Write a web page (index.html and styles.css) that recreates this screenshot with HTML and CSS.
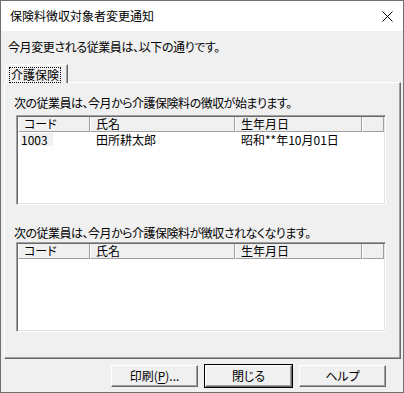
FILE: index.html
```html
<!DOCTYPE html>
<html lang="ja">
<head>
  <meta charset="UTF-8" />
  <title>保険料徴収対象者変更通知</title>
  <link rel="stylesheet" href="styles.css">
</head>
<body>
  <div class="window">
    <div class="titlebar">
      <span class="title">保険料徴収対象者変更通知</span>
      <svg class="close" width="11" height="11" viewBox="0 0 11 11">
        <path d="M0.5 0.5 L10.5 10.5 M10.5 0.5 L0.5 10.5" stroke="#000" stroke-width="1" fill="none"/>
      </svg>
    </div>

    <div class="content">
      <p class="intro">今月変更される従業員は、以下の通りです。</p>

      <div class="tabs">
        <div class="tab"><span class="tab-label">介護保険</span></div>
      </div>

      <div class="panel">
        <p class="caption first">次の従業員は、今月から介護保険料の徴収が始まります。</p>
        <div class="list">
          <div class="list-head">
            <div class="col code">コード</div>
            <div class="col name">氏名</div>
            <div class="col birth">生年月日</div>
            <div class="col rest"></div>
          </div>
          <div class="list-row">
            <div class="cell code"><span class="selected">1003</span></div>
            <div class="cell name">田所耕太郎</div>
            <div class="cell birth">昭和**年10月01日</div>
          </div>
        </div>

        <p class="caption second">次の従業員は、今月から介護保険料が徴収されなくなります。</p>
        <div class="list">
          <div class="list-head">
            <div class="col code">コード</div>
            <div class="col name">氏名</div>
            <div class="col birth">生年月日</div>
            <div class="col rest"></div>
          </div>
        </div>
      </div>

      <div class="buttons">
        <button class="btn">印刷(<u>P</u>)...</button>
        <button class="btn default">閉じる</button>
        <button class="btn">ヘルプ</button>
      </div>
    </div>
  </div>
</body>
</html>
```

FILE: styles.css
```css
* {
  box-sizing: border-box;
}

body {
  margin: 0;
  font-family: "Noto Sans CJK JP", "Noto Sans", sans-serif;
  font-size: 12px;
  font-feature-settings: "palt";
  color: #000;
  background: #fff;
}

p {
  margin: 0;
}

.window {
  width: 404px;
  height: 393px;
  border: 1px solid #6f6f6f;
  display: flex;
  flex-direction: column;
}

.titlebar {
  height: 30px;
  background: #fff;
  display: flex;
  align-items: center;
  justify-content: space-between;
  padding: 0 10px 0 9px;
}

.title {
  line-height: 16px;
}

.close {
  display: block;
}

.content {
  flex: 1;
  background: #f0f0f0;
  padding: 8px 2px 0 3px;
  display: flex;
  flex-direction: column;
}

.intro {
  line-height: 16px;
  padding-left: 4px;
  letter-spacing: -0.4px;
}

.tabs {
  margin-top: 9px;
  padding-left: 2px;
  display: flex;
  height: 18px;
}

.tab {
  width: 62px;
  height: 19px;
  background: #f0f0f0;
  border-top: 1px solid #fff;
  border-left: 1px solid #fff;
  border-right: 1px solid #696969;
  box-shadow: inset -1px 0 0 #a0a0a0;
  padding: 1px 0 0 3px;
  position: relative;
  z-index: 1;
}

.tab-label {
  display: inline-block;
  line-height: 14px;
  padding: 0 1px;
  outline: 1px dotted #000;
}

.panel {
  height: 277px;
  border-top: 1px solid #fff;
  border-left: 1px solid #fff;
  border-right: 1px solid #696969;
  border-bottom: 1px solid #696969;
  box-shadow: inset -1px -1px 0 #a0a0a0;
  padding: 12px 0 0 9px;
}

.caption {
  line-height: 16px;
  letter-spacing: -0.5px;
}

.caption.second {
  margin-top: 20px;
}

.list {
  width: 370px;
  height: 90px;
  margin-top: 4px;
  margin-left: 2px;
  background: #fff;
  border-top: 1px solid #a0a0a0;
  border-left: 1px solid #a0a0a0;
  border-right: 1px solid #fff;
  border-bottom: 1px solid #fff;
  box-shadow: inset 1px 1px 0 #696969, inset -1px -1px 0 #e3e3e3;
  padding: 1px;
}

.caption.second + .list {
  margin-top: 1px;
}

.list-head {
  display: flex;
  height: 15px;
}

.col {
  height: 15px;
  line-height: 14px;
  background: #f0f0f0;
  border-left: 1px solid #fff;
  border-right: 1px solid #a0a0a0;
  border-bottom: 1px solid #a0a0a0;
  padding-left: 5px;
}

.code {
  width: 72px;
}

.name {
  width: 145px;
}

.birth {
  width: 127px;
}

.col.rest {
  flex: 1;
}

.list-row {
  display: flex;
  height: 14px;
  margin-top: 1px;
}

.cell {
  line-height: 13px;
  padding-left: 6px;
}

.cell.code {
  padding-left: 2px;
}

.selected {
  display: inline-block;
  width: 33px;
  height: 13px;
  background: #f0f0f0;
  padding-left: 1px;
}

.buttons {
  display: flex;
  justify-content: flex-end;
  gap: 7px;
  padding: 6px 15px 0 0;
}

.btn {
  width: 87px;
  height: 22px;
  font: inherit;
  font-size: 12px;
  line-height: 14px;
  color: #000;
  background: #f0f0f0;
  border-top: 1px solid #fff;
  border-left: 1px solid #fff;
  border-right: 1px solid #696969;
  border-bottom: 1px solid #696969;
  box-shadow: inset -1px -1px 0 #a0a0a0;
  padding: 0;
}

.btn u {
  text-underline-offset: 2px;
}

.btn.default {
  outline: 1px solid #000;
}
```
